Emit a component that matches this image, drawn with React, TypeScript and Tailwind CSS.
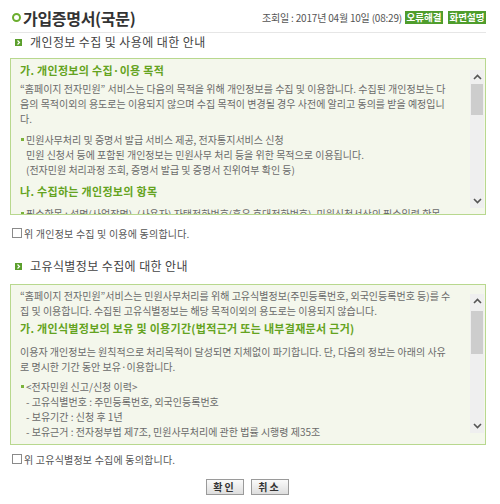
import React from 'react';

const Chevron = ({ up }: { up?: boolean }) => (
  <svg width="9" height="6" viewBox="0 0 9 6">
    <polyline
      points={up ? '1,5 4.5,1.5 8,5' : '1,1 4.5,4.5 8,1'}
      fill="none"
      stroke="#555"
      strokeWidth="1.6"
    />
  </svg>
);

const ScrollBar = ({ box }: { box: 1 | 2 }) => (
  <div
    className={`w-[14px] mr-[1px] flex flex-col bg-[#efefef] ${
      box === 1 ? 'mt-[11px] mb-[6px]' : 'mt-[9px] mb-[11px]'
    }`}
  >
    <div className="h-[14px] flex items-center justify-center">
      <Chevron up />
    </div>
    <div className="flex-1">
      <div className={`mx-[1px] bg-[#cdcdcd] ${box === 1 ? 'h-[31px]' : 'mt-[3px] h-[43px]'}`} />
    </div>
    <div className="h-[14px] flex items-center justify-center">
      <Chevron />
    </div>
  </div>
);

const SectionTitle = ({ children }: { children: React.ReactNode }) => (
  <div className="flex items-center h-[16px] pl-[5px] gap-[8px]">
    <span className="w-[7px] h-[7px] bg-[#5b9f2c] flex items-center justify-center">
      <svg width="5" height="5" viewBox="0 0 5 5">
        <polyline points="1.5,0.5 3.5,2.5 1.5,4.5" fill="none" stroke="#fff" strokeWidth="1.2" />
      </svg>
    </span>
    <span className="text-[12px] text-[#444] tracking-[0.4px]">{children}</span>
  </div>
);

const GreenHead = ({ children, className = '' }: { children: React.ReactNode; className?: string }) => (
  <div className={`text-[11px] font-bold text-[#64a320] tracking-[0.3px] leading-[16px] whitespace-nowrap ${className}`}>
    {children}
  </div>
);

const Lines = ({ lines, className = '' }: { lines: string[]; className?: string }) => (
  <div className={`text-[10px] leading-[15px] text-[#6a6a6a] ${className}`}>
    {lines.map((l) => (
      <div key={l} className="whitespace-nowrap">{l}</div>
    ))}
  </div>
);

const Bullet = ({ lines, className = '' }: { lines: string[]; className?: string }) => (
  <div className={`flex text-[10px] leading-[15px] text-[#6a6a6a] ${className}`}>
    <span className="w-[6px] pt-[6px] shrink-0">
      <span className="block w-[3px] h-[3px] bg-[#7bb33a] ml-[1px]" />
    </span>
    <div>
      {lines.map((l) => (
        <div key={l} className="whitespace-nowrap">{l}</div>
      ))}
    </div>
  </div>
);

const Agree = ({ text, className = '' }: { text: string; className?: string }) => (
  <label className={`flex items-center h-[14px] pl-[2px] gap-[2px] ${className}`}>
    <span className="w-[10px] h-[10px] border border-[#8a8a8a] bg-white" />
    <span className="text-[10px] text-[#555] tracking-[0.2px]">{text}</span>
  </label>
);

export default function App() {
  return (
    <div className="w-[500px] h-[504px] bg-white font-['Noto_Sans_CJK_KR',sans-serif] overflow-hidden">
      <div className="mx-[10px] w-[476px]">
        {/* 헤더 */}
        <div className="h-[33px] border-b border-[#e6e6e6] flex items-center justify-between pl-[2px] pt-[3px]">
          <div className="flex items-center gap-[2px]">
            <span className="w-[9px] h-[9px] rounded-full border-[2px] border-[#6cae2f]" />
            <h1 className="text-[16px] font-bold text-[#333] leading-none tracking-[-0.3px]">가입증명서(국문)</h1>
          </div>
          <div className="flex items-center">
            <span className="text-[10px] text-[#555] tracking-[-0.2px] mr-[3px]">조회일 : 2017년 04월 10일 (08:29)</span>
            <span className="w-[38px] h-[13px] bg-[#4f9d2c] text-white text-[9.5px] font-bold flex items-center justify-center leading-none">오류해결</span>
            <span className="w-[38px] h-[13px] ml-[5px] bg-[#4f9d2c] text-white text-[9.5px] font-bold flex items-center justify-center leading-none">화면설명</span>
          </div>
        </div>

        {/* 개인정보 */}
        <div className="mt-[1px]">
          <SectionTitle>개인정보 수집 및 사용에 대한 안내</SectionTitle>
        </div>
        <div className="mt-[8px] h-[157px] border border-[#b8d88e] bg-[#f4f7ec] flex">
          <div className="flex-1 overflow-hidden pl-[9px] pt-[3px]">
            <GreenHead>가. 개인정보의 수집·이용 목적</GreenHead>
            <Lines
              className="mt-[3px]"
              lines={[
                '“홈페이지 전자민원” 서비스는 다음의 목적을 위해 개인정보를 수집 및 이용합니다. 수집된 개인정보는 다',
                '음의 목적이외의 용도로는 이용되지 않으며 수집 목적이 변경될 경우 사전에 알리고 동의를 받을 예정입니',
                '다.',
              ]}
            />
            <Bullet
              className="mt-[6px]"
              lines={[
                '민원사무처리 및 증명서 발급 서비스 제공, 전자통지서비스 신청',
                '민원 신청서 등에 포함된 개인정보는 민원사무 처리 등을 위한 목적으로 이용됩니다.',
                '(전자민원 처리과정 조회, 증명서 발급 및 증명서 진위여부 확인 등)',
              ]}
            />
            <GreenHead className="mt-[6px]">나. 수집하는 개인정보의 항목</GreenHead>
            <Bullet
              className="mt-[7px]"
              lines={['필수항목 : 성명(사업장명), (사용자) 자택전화번호(혹은 휴대전화번호), 민원신청서상의 필수입력 항목']}
            />
          </div>
          <ScrollBar box={1} />
        </div>
        <Agree className="mt-[11px]" text="위 개인정보 수집 및 이용에 동의합니다." />

        {/* 고유식별정보 */}
        <div className="mt-[18px]">
          <SectionTitle>고유식별정보 수집에 대한 안내</SectionTitle>
        </div>
        <div className="mt-[10px] h-[161px] border border-[#b8d88e] bg-[#f4f7ec] flex">
          <div className="flex-1 overflow-hidden pl-[9px] pt-[3px]">
            <Lines
              lines={[
                '“홈페이지 전자민원”서비스는 민원사무처리를 위해 고유식별정보(주민등록번호, 외국인등록번호 등)를 수',
                '집 및 이용합니다. 수집된 고유식별정보는 해당 목적이외의 용도로는 이용되지 않습니다.',
              ]}
            />
            <GreenHead className="mt-[2px]">가. 개인식별정보의 보유 및 이용기간(법적근거 또는 내부결재문서 근거)</GreenHead>
            <Lines
              className="mt-[8px]"
              lines={[
                '이용자 개인정보는 원칙적으로 처리목적이 달성되면 지체없이 파기합니다. 단, 다음의 정보는 아래의 사유',
                '로 명시한 기간 동안 보유·이용합니다.',
              ]}
            />
            <Bullet
              className="mt-[5px]"
              lines={[
                '<전자민원 신고/신청 이력>',
                '- 고유식별번호 : 주민등록번호, 외국인등록번호',
                '- 보유기간 : 신청 후 1년',
                '- 보유근거 : 전자정부법 제7조, 민원사무처리에 관한 법률 시행령 제35조',
              ]}
            />
          </div>
          <ScrollBar box={2} />
        </div>
        <Agree className="mt-[7px]" text="위 고유식별정보 수집에 동의합니다." />

        {/* 버튼 */}
        <div className="mt-[13px] flex justify-center gap-[7px] pr-[2px]">
          <button className="w-[38px] h-[16px] border border-[#9a9a9a] bg-gradient-to-b from-[#fafafa] to-[#dedede] text-[10px] font-bold text-[#333] leading-none tracking-[2px]">
            확인
          </button>
          <button className="w-[38px] h-[16px] border border-[#9a9a9a] bg-gradient-to-b from-[#fafafa] to-[#dedede] text-[10px] font-bold text-[#333] leading-none tracking-[2px]">
            취소
          </button>
        </div>
      </div>
    </div>
  );
}
